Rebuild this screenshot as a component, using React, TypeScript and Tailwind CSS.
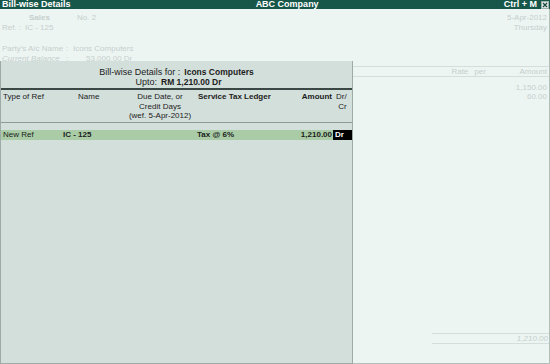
import React from 'react'

const faded = 'text-[#c6cfcc]'

const TitleBar: React.FC = () => (
  <div className="h-[9px] bg-[#17574a] flex items-center text-white font-bold text-[9px] leading-[9px]">
    <span className="pl-[2px]">Bill-wise Details</span>
    <span className="flex-1 text-center">ABC Company</span>
    <span className="pr-[4px]">Ctrl + M</span>
    <svg width="8" height="8" viewBox="0 0 8 8" className="mr-[1px]">
      <rect x="0.5" y="0.5" width="7" height="7" fill="#dfe7e5" stroke="#9fb3ad" />
      <path d="M2 2 L6 6 M6 2 L2 6" stroke="#1d4a40" strokeWidth="1.2" />
    </svg>
  </div>
)

const Background: React.FC = () => (
  <div className={`h-[355px] flex flex-col border-r border-b border-[#b4bfbc] ${faded}`}>
    <div className="flex mt-[4px] h-[10px] leading-[10px]">
      <span className="pl-[29px] w-[77px] font-bold">Sales</span>
      <span>No. 2</span>
      <span className="ml-auto pr-[2px]">5-Apr-2012</span>
    </div>
    <div className="flex h-[10px] leading-[10px]">
      <span className="pl-[2px] w-[25px]">Ref. :</span>
      <span>IC - 125</span>
      <span className="ml-auto pr-[2px]">Thursday</span>
    </div>
    <div className="flex mt-[11px] h-[10px] leading-[10px]">
      <span className="pl-[2px] w-[66px]">Party's A/c Name</span>
      <span className="w-[7px]">:</span>
      <span>Icons Computers</span>
    </div>
    <div className="flex h-[10px] leading-[10px]">
      <span className="pl-[2px] w-[66px] italic">Current Balance</span>
      <span className="w-[20px]">:</span>
      <span>53,000.00 Dr</span>
    </div>
    <div className="mt-[2px] border-t border-b border-[#d6dedc] h-[11px] flex leading-[9px]">
      <span className="ml-auto w-[23px]">Rate</span>
      <span className="w-[45px]">per</span>
      <span className="pr-[2px]">Amount</span>
    </div>
    <div className="mt-[6px] flex flex-col items-end pr-[2px] leading-[9px]">
      <span>1,150.00</span>
      <span>60.00</span>
    </div>
    <div className="mt-auto mb-[19px] ml-[432px] border-t border-b border-[#d6dedc] h-[11px] leading-[9px] text-right pr-[1px] italic">
      1,210.00
    </div>
  </div>
)

const Panel: React.FC = () => (
  <div className="absolute left-0 top-[61px] w-[353px] h-[303px] bg-[#d3dfdb] border-l border-r border-b border-[#9eaaa7] text-[#1c1c1c]">
    <div className="flex flex-col items-center pt-[6px]">
      <div className="h-[10px] leading-[10px] flex items-baseline">
        <span className="text-[9px]">Bill-wise Details for :</span>
        <span className="font-bold text-[8.5px] pl-[4px]">Icons Computers</span>
      </div>
      <div className="h-[10px] leading-[10px] flex items-baseline pl-[4px]">
        <span className="text-[9px]">Upto:</span>
        <span className="font-bold text-[8.5px] pl-[4px]">RM 1,210.00 Dr</span>
      </div>
    </div>
    <div className="mt-[1px] h-[2px] bg-[#3a4745]" />
    <div className="flex pt-[2px] pl-[2px] leading-[9.7px] border-b border-[#8d9996] h-[33px]">
      <span className="w-[75px]">Type of Ref</span>
      <span className="w-[47px]">Name</span>
      <span className="w-[70px] text-center">Due Date, or<br />Credit Days<br />(wef. 5-Apr-2012)</span>
      <span className="w-[90px] pl-[3px] font-bold">Service Tax Ledger</span>
      <span className="w-[47px] text-right font-bold">Amount</span>
      <span className="pl-[4px]">Dr/<br />&nbsp;Cr</span>
    </div>
    <div className="mt-[7px] flex h-[10px] leading-[10px]">
      <div className="w-[332px] bg-[#a9cca7] flex pl-[2px]">
        <span className="w-[60px]">New Ref</span>
        <span className="w-[132px] font-bold">IC - 125</span>
        <span className="w-[90px] pl-[2px] font-bold">Tax @ 6%</span>
        <span className="w-[47px] text-right font-bold">1,210.00</span>
      </div>
      <div className="flex-1 bg-black text-white font-bold pl-[2px]">Dr</div>
    </div>
  </div>
)

const App: React.FC = () => {
  return (
    <div className="w-[550px] h-[364px] bg-[#edf5f3] relative overflow-hidden font-['Liberation_Sans',Arial,sans-serif] text-[8px]">
      <TitleBar />
      <Background />
      <Panel />
    </div>
  )
}

export default App
